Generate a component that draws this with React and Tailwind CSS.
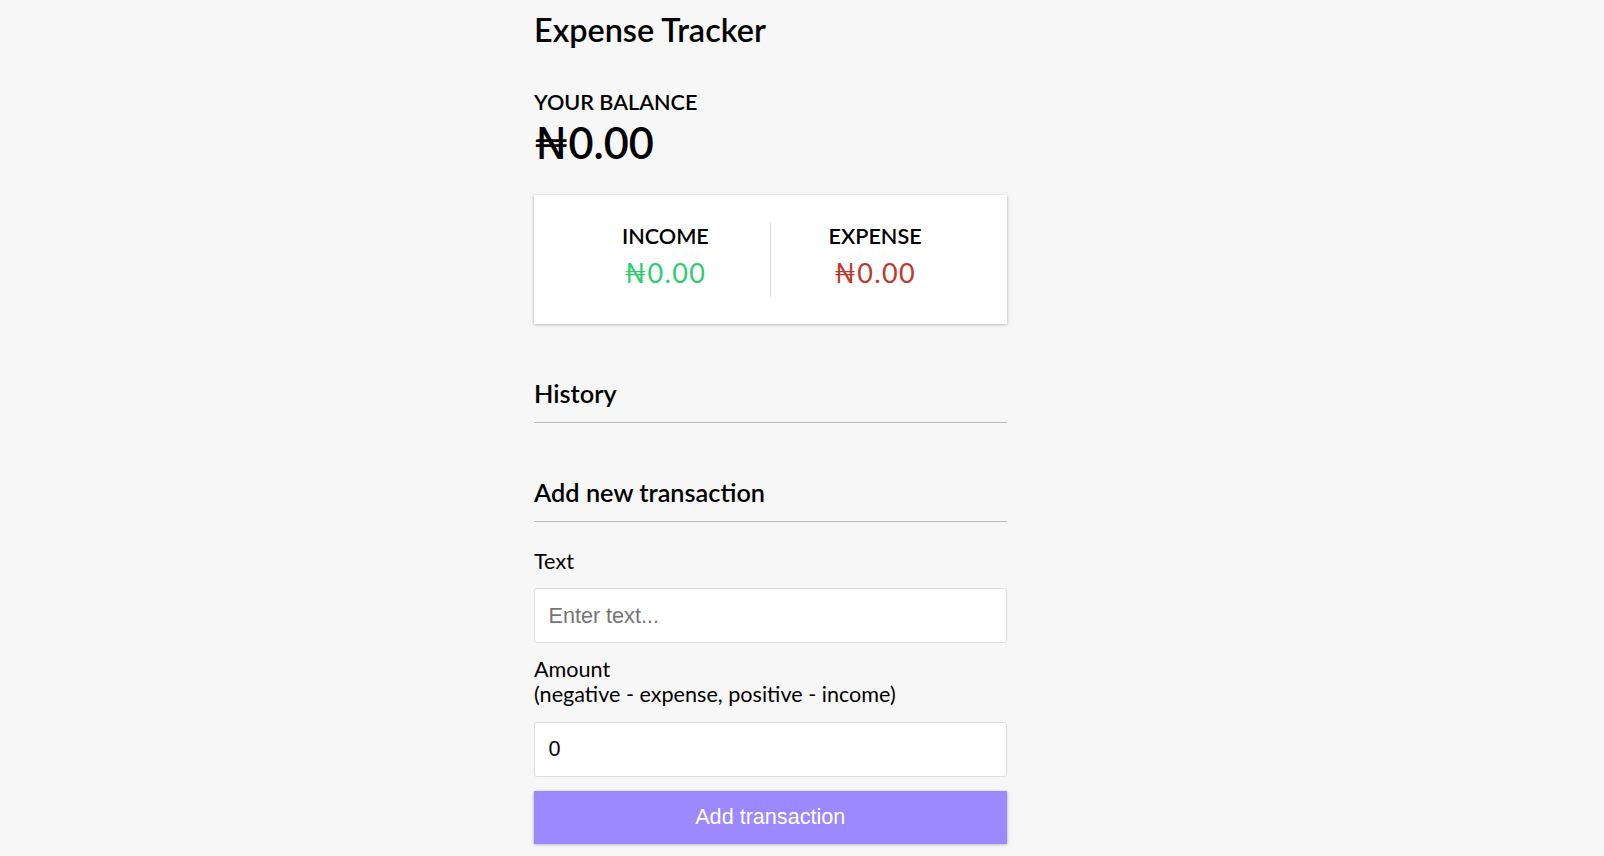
export default function App() {
  const shadow = "shadow-[0_1.35px_4px_rgba(0,0,0,0.12),0_1.35px_2.7px_rgba(0,0,0,0.24)]";
  return (
    <div className="h-[856px] overflow-hidden bg-[#f7f7f7] text-black" style={{ fontFamily: "Lato, 'Noto Sans', sans-serif" }}>
      <div className="ml-[534px] w-[472.5px] pt-[11px]">
        <h2 className="text-[32.4px] leading-[38.9px] font-semibold mb-[39.8px]">Expense Tracker</h2>

        <h4 className="text-[21.6px] leading-[25.9px] font-semibold uppercase">Your Balance</h4>
        <h1 className="text-[43.2px] leading-[52.4px] font-semibold">₦0.00</h1>

        <div className={`bg-white ${shadow} p-[27px] flex my-[27px]`}>
          <div className="flex-1 text-center border-r-[1.35px] border-[#dedede]">
            <h4 className="pt-[1.5px] text-[21.6px] leading-[25.9px] font-semibold uppercase">Income</h4>
            <p className="text-[27px] leading-[34.1px] tracking-[1.35px] my-[6.75px] text-[#2ecc71]">₦0.00</p>
          </div>
          <div className="flex-1 text-center">
            <h4 className="pt-[1.5px] text-[21.6px] leading-[25.9px] font-semibold uppercase">Expense</h4>
            <p className="text-[27px] leading-[34.1px] tracking-[1.35px] my-[6.75px] text-[#c0392b]">₦0.00</p>
          </div>
        </div>

        <h3 className="mt-[54px] text-[25.3px] leading-[30.3px] font-semibold border-b-[1.35px] border-[#bbb] pb-[13.5px]">History</h3>
        <ul className="mt-[13.5px] mb-[54px]"></ul>

        <h3 className="text-[25.3px] leading-[30.3px] font-semibold border-b-[1.35px] border-[#bbb] pb-[13.5px] mb-[13.5px]">Add new transaction</h3>
        <form>
          <div className="text-[21.6px] leading-[25.9px]">
            <label className="inline-block my-[13.5px]">Text</label>
            <input
              type="text"
              placeholder="Enter text..."
              className="block w-full h-[55px] bg-white border-[1.35px] border-[#dedede] rounded-[2.7px] px-[13.5px] text-[21.6px] leading-[24.8px] placeholder:text-[#757575] outline-none"
              style={{ fontFamily: "Arial, 'Liberation Sans', sans-serif" }}
            />
          </div>
          <div className="text-[21.6px] leading-[25.9px]">
            <label className="inline-block my-[13.5px]">
              Amount <br />
              (negative - expense, positive - income)
            </label>
            <input
              type="text"
              defaultValue="0"
              className="block w-full h-[55px] bg-white border-[1.35px] border-[#dedede] rounded-[2.7px] px-[13.5px] text-[21.6px] leading-[24.8px] outline-none"
              style={{ fontFamily: "Arial, 'Liberation Sans', sans-serif" }}
            />
          </div>
          <button
            type="button"
            className={`block w-full h-[53px] bg-[#9c88ff] ${shadow} text-white text-[21.6px] leading-[24.8px] px-[13.5px] mt-[14px]`}
            style={{ fontFamily: "Arial, 'Liberation Sans', sans-serif" }}
          >
            Add transaction
          </button>
        </form>
      </div>
    </div>
  );
}
